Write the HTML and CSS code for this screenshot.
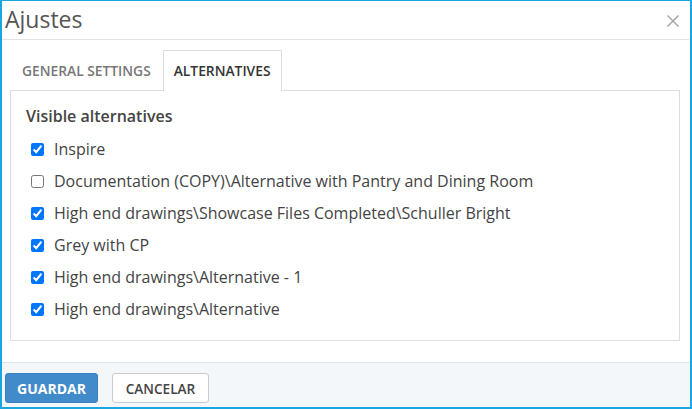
FILE: index.html
```html
<!DOCTYPE html>
<html>
<head>
<meta charset="utf-8">
<link rel="stylesheet" href="styles.css">
</head>
<body>
<div class="window">
  <div class="header">
    <div class="title">Ajustes</div>
    <div class="close">
      <svg width="14" height="14" viewBox="0 0 14 14"><path d="M1.5 1.5 L12.5 12.5 M12.5 1.5 L1.5 12.5" stroke="#a9a9a9" stroke-width="1.6" fill="none"/></svg>
    </div>
  </div>
  <div class="body">
    <div class="tabs">
      <div class="tab">General settings</div>
      <div class="tab active">Alternatives</div>
    </div>
    <div class="panel">
      <div class="heading">Visible alternatives</div>
      <label class="row"><input type="checkbox" checked><span>Inspire</span></label>
      <label class="row"><input type="checkbox"><span>Documentation (COPY)\Alternative with Pantry and Dining Room</span></label>
      <label class="row"><input type="checkbox" checked><span>High end drawings\Showcase Files Completed\Schuller Bright</span></label>
      <label class="row"><input type="checkbox" checked><span>Grey with CP</span></label>
      <label class="row"><input type="checkbox" checked><span>High end drawings\Alternative - 1</span></label>
      <label class="row"><input type="checkbox" checked><span>High end drawings\Alternative</span></label>
    </div>
  </div>
  <div class="footer">
    <button class="btn primary">Guardar</button>
    <button class="btn default">Cancelar</button>
  </div>
</div>
</body>
</html>
```

FILE: styles.css
```css
html, body {
  margin: 0;
  padding: 0;
  background: #fff;
}
body {
  font-family: "Open Sans", "Liberation Sans", sans-serif;
  color: #444;
}
.window {
  box-sizing: border-box;
  width: 692px;
  height: 409px;
  border-style: solid;
  border-color: #1aa6e0;
  border-width: 1px 2px 2px 2px;
  display: flex;
  flex-direction: column;
  overflow: hidden;
}
.header {
  height: 38px;
  border-bottom: 1px solid #e3e3e3;
  display: flex;
  align-items: center;
  justify-content: space-between;
  padding: 0 10px 0 3px;
}
.title {
  font-size: 23px;
  color: #555;
  line-height: 30px;
  margin-top: -2px;
}
.close {
  width: 14px;
  height: 14px;
  display: flex;
  margin-top: 1px;
}
.body {
  padding: 10px 10px 0 8px;
  flex: 1;
}
.tabs {
  display: flex;
  position: relative;
  z-index: 1;
  margin-bottom: -1px;
}
.tab {
  border: 1px solid transparent;
  border-bottom: none;
  padding: 10px 10px 10px 11px;
  margin-right: 1px;
  font-size: 13.8px;
  font-weight: 600;
  line-height: 19px;
  text-transform: uppercase;
  color: #777;
}
.tab.active {
  border-color: #dddddd;
  background: #fff;
  color: #333;
  padding: 10px 11px 11px 10px;
}
.panel {
  border: 1px solid #dddddd;
  padding: 14px 15px 15px 15px;
}
.heading {
  font-size: 16px;
  font-weight: 600;
  line-height: 22px;
  color: #444;
  margin-bottom: 6px;
}
.row {
  display: flex;
  align-items: center;
  height: 32px;
  font-size: 16px;
  color: #444;
}
.row input {
  width: 13px;
  height: 13px;
  margin: 0 10px 0 5px;
}
.footer {
  border-top: 1px solid #dfe4ea;
  background: #f4f7fa;
  display: flex;
  align-items: flex-start;
  padding: 10px 3px 0 3px;
  gap: 14px;
  box-sizing: border-box;
  height: 45px;
}
.btn {
  height: 30px;
  font-family: "Open Sans", "Liberation Sans", sans-serif;
  text-transform: uppercase;
  border-radius: 3px;
  padding: 0;
  cursor: pointer;
}
.btn.primary {
  background: #428bca;
  border: 1px solid #3b80be;
  color: #fff;
  width: 93px;
  font-size: 14px;
  font-weight: 700;
}
.btn.default {
  background: #fff;
  border: 1px solid #cccccc;
  color: #444;
  font-size: 13.6px;
  font-weight: 600;
  width: 97px;
}
```
